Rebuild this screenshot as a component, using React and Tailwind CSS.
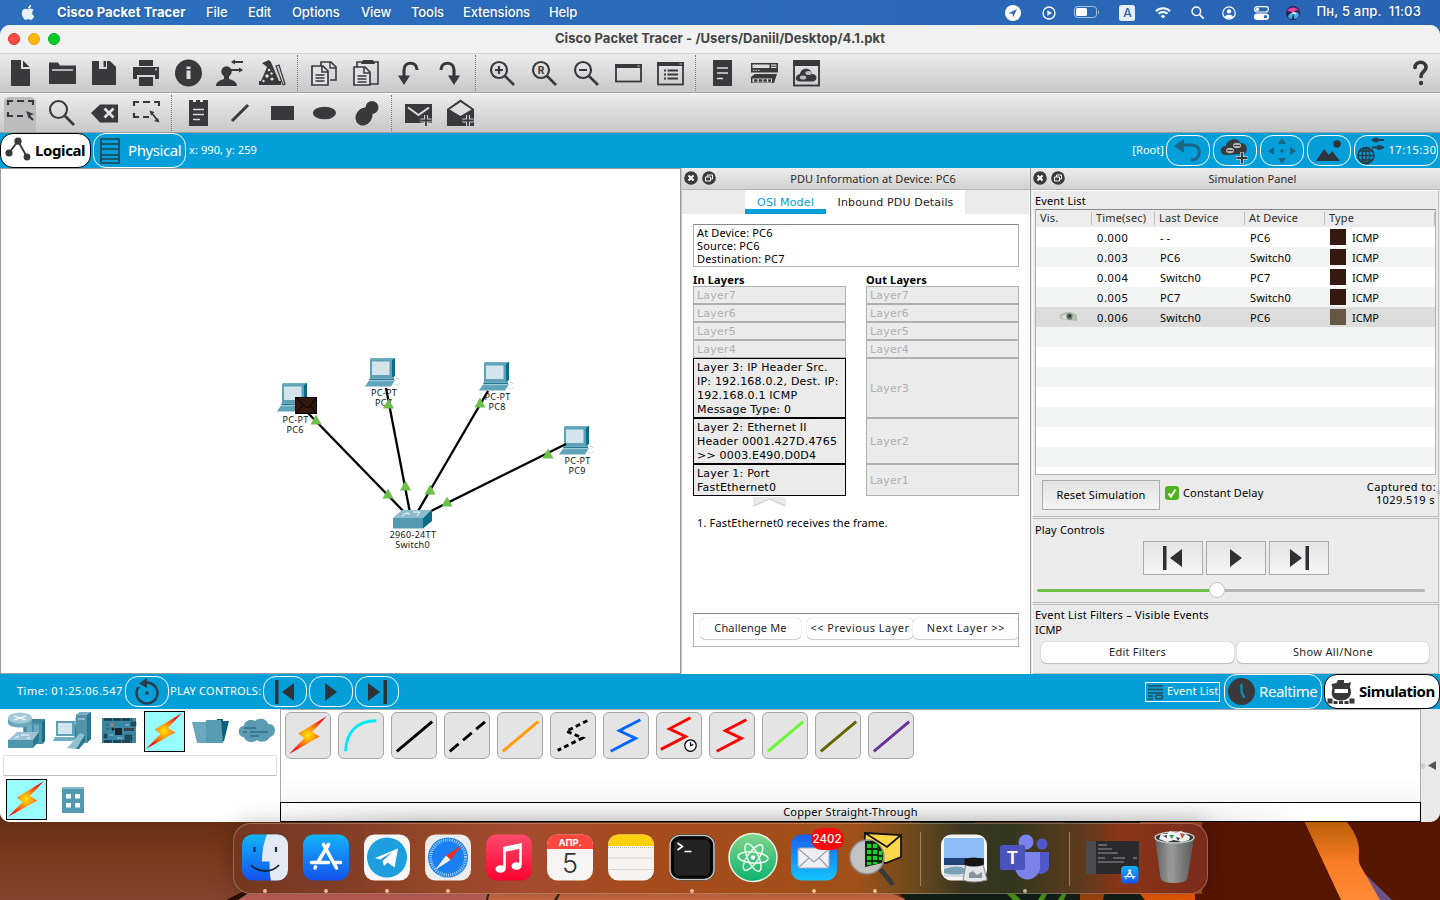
import React from "react";

/* ---------- shared helpers ---------- */
const INK = "#39393b";

function Ico({ children, w = 28, h = 28, vb = "0 0 28 28", className = "" }) {
  return (
    <svg width={w} height={h} viewBox={vb} fill="none" className={"shrink-0 block " + className}>
      {children}
    </svg>
  );
}

function Cell({ children, active }) {
  return (
    <div className="w-[42px] h-full flex items-center justify-center shrink-0 pr-[2px]">
      {active ? (
        <div className="w-8 h-[35px] mt-[3px] rounded-t-[5px] bg-[#bcbcbc] flex items-start justify-center pt-[1px]">{children}</div>
      ) : (
        children
      )}
    </div>
  );
}

function Sep() {
  return (
    <div className="w-[10px] h-full shrink-0 pl-[3px] py-[1px]">
      <div className="h-full w-px border-l border-dotted border-[#777]" />
    </div>
  );
}

/* ---------- macOS menu bar ---------- */
function MenuBar() {
  const items = [
    ["File", "w-[42px]"],
    ["Edit", "w-[44px]"],
    ["Options", "w-[69px]"],
    ["View", "w-[50px]"],
    ["Tools", "w-[52px]"],
    ["Extensions", "w-[86px]"],
    ["Help", "w-[40px]"],
  ];
  return (
    <header className="h-[25px] shrink-0 flex items-center text-white text-[13px] font-medium bg-gradient-to-r from-[#2b6fbd] via-[#2a6bba] to-[#2864b4] [text-shadow:0_1px_2px_rgba(0,0,0,.25)]">
      <Ico w={14} h={17} vb="0 0 384 512" className="ml-[21px] mr-[22px] -mt-[1px]">
        <path
          fill="#e9f0fa"
          d="M318.700 268.700c-.2-36.700 16.400-64.400 50-84.800-18.800-26.900-47.200-41.700-84.700-44.600-35.500-2.800-74.300 20.700-88.500 20.700-15 0-49.400-19.700-76.400-19.700C63.300 141.200 4 184.800 4 273.500q0 39.300 14.400 81.200c12.800 36.700 59 126.700 107.200 125.200 25.200-.6 43-17.900 75.800-17.900 31.800 0 48.300 17.900 76.400 17.900 48.600-.7 90.400-82.500 102.600-119.300-65.200-30.700-61.700-90-61.700-91.900zm-56.600-164.200c27.300-32.400 24.800-61.900 24-72.500-24.100 1.400-52 16.400-67.900 34.900-17.500 19.800-27.800 44.300-25.600 71.900 26.100 2 49.900-11.400 69.500-34.300z"
        />
      </Ico>
      <span className="w-[149px] font-bold tracking-[0.1px]">Cisco Packet Tracer</span>
      {items.map(([t, w]) => (
        <span key={t} className={w + " tracking-[-0.1px]"}>
          {t}
        </span>
      ))}
      <div className="ml-auto flex items-center">
        <Ico w={16} h={16} vb="0 0 16 16" className="mr-[21px]">
          <circle cx="8" cy="8" r="8" fill="#fff" />
          <path d="M3.500 8.200 12 4 8 12.500 7.500 8.700z" fill="#2a69b8" />
        </Ico>
        <Ico w={14} h={14} vb="0 0 14 14" className="mr-[18px]">
          <circle cx="7" cy="7" r="6" stroke="#fff" strokeWidth="1.300" />
          <path d="M5.300 4.200 10 7 5.300 9.800z" fill="#fff" />
        </Ico>
        <Ico w={26} h={13} vb="0 0 26 13" className="mr-[19px]">
          <rect x=".5" y=".5" width="22" height="11" rx="3" stroke="#a9c3e4" />
          <rect x="2" y="2" width="11" height="8" rx="1.500" fill="#fff" />
          <path d="M24 4.200c1.400.8 1.400 3.200 0 4z" fill="#a9c3e4" />
        </Ico>
        <span className="w-4 h-4 rounded-[2.500px] bg-[#e6eefa] text-[#2a5fa6] text-[12px] leading-4 text-center mr-[20px] [text-shadow:none]">A</span>
        <Ico w={16} h={12} vb="0 0 16 12" className="mr-[20px]">
          <path d="M1 4.200a10 10 0 0 1 14 0M3.500 6.800a6.300 6.300 0 0 1 9 0" stroke="#fff" strokeWidth="2" />
          <path d="M5.700 9.200a3.300 3.300 0 0 1 4.600 0L8 11.600z" fill="#fff" />
        </Ico>
        <Ico w={13} h={13} vb="0 0 13 13" className="mr-[18px]">
          <circle cx="5.300" cy="5.300" r="4.300" stroke="#fff" strokeWidth="1.400" />
          <path d="m8.500 8.500 3.700 3.700" stroke="#fff" strokeWidth="1.700" strokeLinecap="round" />
        </Ico>
        <Ico w={14} h={14} vb="0 0 14 14" className="mr-[18px]">
          <circle cx="7" cy="7" r="6.200" stroke="#fff" strokeWidth="1.200" />
          <circle cx="7" cy="5.400" r="2.200" fill="#fff" />
          <path d="M3 11c.5-3 7.500-3 8 0-2 2-6 2-8 0z" fill="#fff" />
        </Ico>
        <Ico w={15} h={14} vb="0 0 15 14" className="mr-[17px]">
          <rect x=".6" y=".6" width="13.800" height="5.400" rx="2.700" stroke="#fff" strokeWidth="1.200" />
          <circle cx="3.500" cy="3.300" r="1.700" fill="#fff" />
          <rect y="7.500" width="15" height="6.500" rx="3.200" fill="#fff" />
          <circle cx="11.500" cy="10.700" r="1.800" fill="#2a69b8" />
        </Ico>
        <Ico w={14} h={14} vb="0 0 14 14" className="mr-[16px]">
          <circle cx="7" cy="7" r="7" fill="#252158" />
          <path d="M1 5.500C3 .5 10 0 12.700 4.500 10 3.500 8 5 6.800 7 5 5.500 3 5 1 5.500z" fill="#e8409a" />
          <path d="M2 10.500C2.500 8 5 7 7 7l-1 6C4 13 2.600 12 2 10.500z" fill="#2bb9c9" />
          <path d="M7 7c3-2 5.500-.5 6 2-1 3-3 4-4.500 4z" fill="#43a7e8" />
          <path d="m4 9 4-3.500L11 9 7.500 7.500z" fill="#fff" />
        </Ico>
        <span className="text-[13px] -mt-[2px] mr-[19px] whitespace-pre tracking-[0.18px]">Пн, 5 апр.  11:03</span>
      </div>
    </header>
  );
}

/* ---------- toolbars ---------- */
function Lens({ children }) {
  return (
    <Ico>
      <circle cx="11" cy="11" r="8" stroke={INK} strokeWidth="2.200" />
      <path d="m17 17 9 9" stroke={INK} strokeWidth="2.600" />
      {children}
    </Ico>
  );
}

const DashBox = (
  <path d="M2 7V3h5M11 3h7M22 3h5v4M2 14v4h5M11 18h6" stroke={INK} strokeWidth="2.200" />
);

function MainToolbar() {
  return (
    <div className="h-[39px] shrink-0 flex bg-gradient-to-b from-[#ececec] to-[#c8c8c8] border-b border-[#a3a3a3] pr-[6px]">
      <Cell><Ico><path d="M5 1h10v9h9v17H5z" fill={INK} /><path d="M17 1.500 23.500 8H17z" fill={INK} /></Ico></Cell>
      <Cell><Ico><path d="M1 3.500h9l2 3h16V25H1z" fill={INK} /><path d="M4 11h21" stroke="#ddd" strokeWidth="1.600" /></Ico></Cell>
      <Cell><Ico><path d="M2 2h18l6 6v18H2z" fill={INK} /><path d="M9 2h8v8H9z" fill="#ddd" /><path d="M13.500 2h2.500v6h-2.500z" fill={INK} /></Ico></Cell>
      <Cell><Ico><path d="M7 1h14v6H7zM1 8h26v12h-4v-4H5v4H1zM7 18h14v9H7z" fill={INK} /><circle cx="24" cy="10.500" r="1" fill="#ddd" /></Ico></Cell>
      <Cell><Ico><circle cx="14.500" cy="14" r="13.500" fill={INK} /><path d="M12.500 11.500h4v8.500h-4zM12.500 7.500h4v2.500h-4z" fill="#dcdcdc" /></Ico></Cell>
      <Cell><Ico><circle cx="10.500" cy="12.500" r="5.200" fill={INK} /><path d="M8 15h5v5c4 1 8 3 8 7H0c0-4 4-6 8-7z" fill={INK} /><path d="M16 3h11M15 11h11" stroke={INK} strokeWidth="1.800" /><path d="m15 3 4-2.500v5zM27 11l-4-2.500v5z" fill={INK} /></Ico></Cell>
      <Cell>
        <Ico>
          <path d="m4 4 7-3 2 2 8 19h2v4H1v-4h2L9 8z" fill={INK} />
          <circle cx="11" cy="11" r="1.300" fill="#ddd" /><circle cx="9" cy="17" r="1.800" fill="#ddd" /><circle cx="14" cy="20" r="1.600" fill="#ddd" /><circle cx="13.500" cy="14.500" r="1.200" fill="#ddd" /><circle cx="5.500" cy="22" r="1.200" fill="#ddd" />
          <path d="m18 7 3-1 6 19-2 1z" fill="#ccc" stroke={INK} strokeWidth="1.200" />
        </Ico>
      </Cell>
      <Sep />
      <Cell>
        <Ico>
          <path d="M11 7V3h10l5 5v13h-6" stroke={INK} strokeWidth="1.600" /><path d="M20 3v6h6" stroke={INK} strokeWidth="1.400" />
          <path d="M2 7h11l5 5v14H2z" fill="#e2e2e2" stroke={INK} strokeWidth="1.700" /><path d="M12 7v6h6" stroke={INK} strokeWidth="1.500" />
          <path d="M5.500 16h9M5.500 19h9M5.500 22h9" stroke={INK} strokeWidth="1.500" />
        </Ico>
      </Cell>
      <Cell>
        <Ico>
          <path d="M5 8V3h21v22h-8" stroke={INK} strokeWidth="1.600" /><path d="M11 1h10l2 4H9z" fill={INK} />
          <path d="M2 8h11l5 5v13H2z" fill="#e2e2e2" stroke={INK} strokeWidth="1.700" /><path d="M12 8v6h6" stroke={INK} strokeWidth="1.500" />
          <path d="M5.500 17h9M5.500 20h9M5.500 23h9" stroke={INK} strokeWidth="1.500" />
        </Ico>
      </Cell>
      <Cell><Ico><path d="M23 11c0-9-13-9-13 0v9" stroke={INK} strokeWidth="3.200" /><path d="M4 16.500h12L10 26z" fill={INK} /></Ico></Cell>
      <Cell><Ico><path d="M5 11c0-9 13-9 13 0v9" stroke={INK} strokeWidth="3.200" /><path d="M12 16.500h12L18 26z" fill={INK} /></Ico></Cell>
      <Sep />
      <Cell><Lens><path d="M7 11h8M11 7v8" stroke={INK} strokeWidth="2.200" /></Lens></Cell>
      <Cell><Lens><text x="11" y="14.700" textAnchor="middle" fontFamily="Inter, sans-serif" fontWeight="700" fontSize="10" fill={INK}>R</text></Lens></Cell>
      <Cell><Lens><path d="M7 11h8" stroke={INK} strokeWidth="2.200" /></Lens></Cell>
      <Cell><Ico><rect x="2" y="6" width="25" height="16.500" stroke={INK} strokeWidth="1.800" /><path d="M1 5h27v4H1z" fill={INK} /><path d="M23.500 6.500h2v1h-2z" fill="#ddd" /></Ico></Cell>
      <Cell><Ico><rect x="2" y="4" width="25" height="21.500" stroke={INK} strokeWidth="1.800" /><path d="M1 3h27v4H1z" fill={INK} /><path d="M23.500 4.500h2v1h-2z" fill="#ddd" /><path d="M8 11.500h2M8 15.500h2M8 19.500h2M11.500 11.500H22M11.500 15.500H22M11.500 19.500H22" stroke={INK} strokeWidth="1.800" /></Ico></Cell>
      <Sep />
      <Cell><Ico><path d="M5 1h19v26H5z" fill={INK} /><path d="M9 9h11M9 14h11M9 19.500h6" stroke="#ddd" strokeWidth="1.700" /></Ico></Cell>
      <Cell>
        <Ico>
          <path d="M1 4h27v9.500H1z" fill={INK} /><path d="M2.500 5.500h17v3.500h-17zM21 5.500h5.500v1.200H21zM21 7.800h5.500V9H21z" fill="#ddd" /><path d="M3 11.300h7" stroke="#ddd" strokeDasharray="1.500 1" />
          <path d="M5 15h22l-3 9H1v-6z" fill={INK} /><path d="M2.500 19.500h19.500v4H2.500z" fill="#ddd" /><path d="M4 21.500h17" stroke={INK} strokeWidth="2.600" strokeDasharray="3.500 1.200" />
        </Ico>
      </Cell>
      <Cell>
        <Ico>
          <rect x="2" y="2" width="25" height="24.500" stroke={INK} strokeWidth="1.900" /><path d="M1 1h27v6H1z" fill={INK} />
          <path d="M8 22.500c-6 0-5-7 0-7.500 1-7 11-7 12 0 6 0 6 7.500 0 7.500z" fill={INK} />
          <ellipse cx="16.500" cy="14" rx="3.200" ry="2" fill="#bbb" /><ellipse cx="11" cy="18.500" rx="3.200" ry="2" fill="#bbb" />
        </Ico>
      </Cell>
      <div className="ml-auto flex items-center">
        <Ico><path d="M9 8.500c0-7 11-7 11 0 0 4-5 4-5 9" stroke={INK} strokeWidth="3.700" strokeLinecap="round" /><circle cx="15" cy="24" r="2.200" fill={INK} /></Ico>
      </div>
    </div>
  );
}

function EditToolbar() {
  return (
    <div className="h-10 shrink-0 flex bg-gradient-to-b from-[#ececec] to-[#c8c8c8] border-t border-white border-b border-b-[#9b9b9b]">
      <Cell active><Ico>{DashBox}<path d="m27 22-3.500-3.500" stroke={INK} strokeWidth="2" /><path d="m19 13 8 3-3.200 1.200L22 21z" fill={INK} transform="translate(1 0)" /></Ico></Cell>
      <Cell><Ico><circle cx="10.500" cy="10.500" r="8.500" stroke={INK} strokeWidth="2.100" /><path d="m17 17 9 9" stroke={INK} strokeWidth="2.600" /></Ico></Cell>
      <Cell><Ico><path d="M1 14 10 5.500h18v18H10z" fill={INK} /><path d="m14.500 9.500 9 9M23.500 9.500l-9 9" stroke="#e4e4e4" strokeWidth="2.800" /></Ico></Cell>
      <Cell><Ico>{DashBox}<path d="m19 13 7 9" stroke={INK} strokeWidth="1.800" /><path d="m17.500 11.500 5 1.500-3.500 3.500zM27.500 23.500l-5.500-1.500 4-3z" fill={INK} /></Ico></Cell>
      <Sep />
      <Cell><Ico><path d="M5 1h4v2h3V1h4v2h3V1h5v26H5z" fill={INK} /><path d="M9 10.500h11M9 15.500h11M9 20.500h7" stroke="#ddd" strokeWidth="1.700" /></Ico></Cell>
      <Cell><Ico><path d="M6 22 22 6" stroke={INK} strokeWidth="3" /></Ico></Cell>
      <Cell><Ico><path d="M3 7h23v14H3z" fill={INK} /></Ico></Cell>
      <Cell><Ico><ellipse cx="14.500" cy="14" rx="11.500" ry="6.300" fill={INK} /></Ico></Cell>
      <Cell><Ico><ellipse cx="12" cy="17.500" rx="8" ry="9.500" fill={INK} transform="rotate(35 12 17.500)" /><circle cx="20" cy="8.500" r="6.500" fill={INK} /></Ico></Cell>
      <Sep />
      <Cell><Ico><path d="M1 5h27v19H1z" fill={INK} /><path d="m4 8.500 10.500 7.500 10.500-7.500" stroke="#ddd" strokeWidth="2" /><path d="M22 16v11M16.500 21.500h11" stroke="#cfcfcf" strokeWidth="4" /><path d="M22 16v11M16.500 21.500h11" stroke={INK} strokeWidth="1.800" /></Ico></Cell>
      <Cell><Ico><path d="M1 10 14.500.500 28 10v17H1z" fill={INK} /><path d="M3.500 10.500 14.500 3l11 7.500-11 6.500z" fill="#ddd" /><path d="M22 16v11M16.500 21.500h11" stroke="#cfcfcf" strokeWidth="4" /><path d="M22 16v11M16.500 21.500h11" stroke={INK} strokeWidth="1.800" /></Ico></Cell>
    </div>
  );
}

const LG = "font-['Noto_Sans',sans-serif]";

function Pill({ children, className = "" }) {
  return (
    <div className={"h-[31px] rounded-[13px] border border-white flex items-center justify-center shrink-0 " + className}>
      {children}
    </div>
  );
}

function NavBar() {
  return (
    <div className={"h-[35px] shrink-0 flex items-center bg-[#049fd9] text-white " + LG}>
      <div className="w-[91px] h-[35px] rounded-[13px] bg-white border border-black flex items-center pl-1 text-black">
        <Ico w={26} h={24} vb="0 0 26 24" className="-mt-[3px]">
          <path d="M4 16 13 4l9 16" stroke={INK} strokeWidth="1.800" />
          <circle cx="4" cy="16" r="3.600" fill={INK} /><circle cx="13" cy="4.200" r="3.600" fill={INK} /><circle cx="22" cy="20" r="3.400" fill={INK} />
        </Ico>
        <span className="text-[15px] font-bold ml-[4px] tracking-[-0.4px]">Logical</span>
      </div>
      <div className="w-[93px] h-[35px] ml-[2px] rounded-[13px] border border-white flex items-center pl-[6px]">
        <Ico w={20} h={26} vb="0 0 20 26">
          <path d="M1 1h18v24H1zM1 6h18M1 11h18M1 17h18M1 21h18" stroke="#20434f" strokeWidth="1.700" />
        </Ico>
        <span className="text-[15px] ml-[8px] tracking-[-0.4px]">Physical</span>
      </div>
      <span className="text-[11px] ml-[3px] tracking-[0.1px]">x: 990, y: 259</span>
      <span className="text-[11px] ml-auto mr-[2px] tracking-[0.05px]">[Root]</span>
      <div className="flex gap-[3px] mr-[2px]">
        <Pill className="w-11"><Ico w={30} h={24} vb="0 0 30 24"><path d="M10 6h9c10 0 10 15-1 15" stroke="#1d6585" strokeWidth="3" /><path d="M1 7 11 0v14z" fill="#1d6585" /></Ico></Pill>
        <Pill className="w-11">
          <Ico w={30} h={26} vb="0 0 30 26">
            <path d="M6 17c-7 0-7-9 0-9C7 0 19-1 20 5c7-1 9 8 4 11z" fill={INK} />
            <ellipse cx="17" cy="7.500" rx="4" ry="2.700" fill="#b5b5b5" /><ellipse cx="10" cy="12.500" rx="4" ry="2.700" fill="#b5b5b5" /><path d="M14 7.500h6M7 12.500h6" stroke={INK} />
            <path d="M22 14v12M16 20h12" stroke="#c9d3d8" strokeWidth="3.600" /><path d="M22 14.500v11M16.500 20h11" stroke={INK} strokeWidth="2" />
          </Ico>
        </Pill>
        <Pill className="w-11"><Ico w={28} h={26} vb="0 0 28 26"><path d="m14 0 4 6h-8zM14 26l4-6h-8zM0 13l6-4v8zM28 13l-6-4v8z" fill="#1d6585" /><circle cx="14" cy="13" r="1.800" fill="#1d6585" /></Ico></Pill>
        <Pill className="w-11"><Ico w={28} h={24} vb="0 0 28 24"><path d="m1 22 8-12 5 6 3-4 8 10z" fill="#2d353b" /><circle cx="22" cy="5" r="3.700" fill="#2d353b" /></Ico></Pill>
        <Pill className="w-[84px]">
          <Ico w={28} h={28} vb="0 0 28 28">
            <g stroke="#273d49" strokeWidth="1.600"><circle cx="9" cy="18.500" r="8" /><ellipse cx="9" cy="18.500" rx="3.800" ry="8" /><path d="M1 18.500h16M9 10.500v16M2.500 14h13M2.500 23h13" /></g>
            <path d="M15 3h12M15 10.500h12" stroke="#273d49" strokeWidth="1.800" /><path d="m14 3 3.500-2.200h3.500v4.400h-3.500zM27 10.500l-3.500-2.200h-3.500v4.400h3.500z" fill="#273d49" />
          </Ico>
          <span className="text-[11px] ml-[3px] mr-[-2px] tracking-[0.55px]">17:15:30</span>
        </Pill>
      </div>
    </div>
  );
}

/* ---------- topology canvas ---------- */
function Pc({ x, y }) {
  return (
    <g transform={`translate(${x} ${y})`}>
      <path d="m5 1 3-1h22v18l-3 2H5z" fill="#0a6c87" />
      <path d="m5 1 3-1h22l-3 2H5z" fill="#6fadc2" />
      <rect x="5" y="1.500" width="22" height="18" fill="#5fa0b8" />
      <rect x="7" y="3.500" width="17.500" height="13.500" fill="#d3e5ea" />
      <path d="M5 19.500h24v3H4z" fill="#23788f" />
      <path d="M5 19.500h24l-1 1.300H5z" fill="#8fbfce" />
      <path d="m4 22.500 26-.5-4 6.500H0z" fill="#5fa3bb" />
      <path d="m4 22.800 25-.3" stroke="#a9d0dc" />
      <path d="m31 20 3 1-2 2M29 26l4 1 2-2" stroke="#b4d3de" strokeDasharray="2 1" fill="none" />
    </g>
  );
}

function Topology() {
  const links = ["M308 413 410 518", "M386 388 411 518", "M488 391 414 518", "M566 444 423 515"];
  const lights = [[316, 420], [388.500, 404], [480, 403], [548, 454], [388, 494], [405.500, 486], [430, 490], [447, 502]];
  const labels = [
    [295.500, 422.500, "PC-PT", "PC6"],
    [384, 396, "PC-PT", "PC7"],
    [497.500, 400, "PC-PT", "PC8"],
    [577.500, 464, "PC-PT", "PC9"],
    [413, 538, "2960-24TT", "Switch0"],
  ];
  return (
    <div className="w-[681px] bg-white border-l border-t border-b border-[#9b9b9b] border-r">
      <svg width="679" height="503" viewBox="1 169 679 503" fill="none" className="block">
        <Pc x={277} y={383} /><Pc x={365} y={358} /><Pc x={479} y={362} /><Pc x={559} y={426} />
        {links.map((d) => <path key={d} d={d} stroke="#000" strokeWidth="2.300" />)}
        <path d="m393 518 9-8h30l-9 8z" fill="#8dbccb" />
        <path d="M393 518h30v10.500h-30z" fill="#529ab2" /><path d="m423 518 9-8v11l-9 7.500z" fill="#0a6c87" />
        <path d="m402 516 4-3 4 1M413 512h7l-3 4" stroke="#fff" />
        <g fontFamily="'Noto Sans',sans-serif" fontSize="9" fill="#111" textAnchor="middle" letterSpacing=".3">
          {labels.map(([x, y, a, b]) => (
            <text key={b} x={x} y={y}>
              {a}
              <tspan x={x - 0.500} dy="10">{b}</tspan>
            </text>
          ))}
        </g>
        {lights.map(([x, y]) => <path key={x + "-" + y} d={`M${x} ${y - 5.500}l5.500 10h-11z`} fill="#6cc04a" />)}
        <rect x="295.500" y="397.500" width="21" height="16" fill="#32180f" stroke="#000" />
        <path d="m296 398 10 9q2 1 4-1l6-8M296 413l7-8M316 413l-6-8" stroke="#000" />
      </svg>
    </div>
  );
}

/* ---------- PDU panel ---------- */
function PanelHead({ title }) {
  return (
    <div className="h-[22px] shrink-0 flex items-center bg-gradient-to-b from-[#ececec] to-[#d2d2d2] border-b border-[#b5b5b5] pl-[2px]">
      <Ico w={32} h={14} vb="0 0 32 14" className="-mt-px">
        <circle cx="7" cy="7" r="6.800" fill="#3b3b3b" /><path d="m4.500 4.500 5 5M9.500 4.500l-5 5" stroke="#fff" strokeWidth="2" />
        <circle cx="25" cy="7" r="6.800" fill="#3b3b3b" /><path d="M23.500 6V4h5v4h-2M21.500 6h5v4h-5z" stroke="#fff" />
      </Ico>
      <span className="flex-1 text-center text-[11px] text-[#2a2a2a] tracking-[0.08px] pt-px">{title}</span>
    </div>
  );
}

function Layer({ t, h, on }) {
  return (
    <div
      className={
        (on ? "border-black text-black " : "border-[#b0b0b0] text-[#b0b0b0] ") +
        h +
        " border bg-[#ebebeb] pl-[3px] pt-[2px] flex items-center text-[11px] leading-[14px] whitespace-pre tracking-[0.2px] font-['DejaVu_Sans',sans-serif]"
      }
    >
      {t}
    </div>
  );
}

function MacButton({ children, className = "" }) {
  return (
    <div className={"h-[21px] rounded-[5px] bg-white shadow-[0_0_1px_rgba(0,0,0,.35),0_1px_1px_rgba(0,0,0,.18)] flex items-center justify-center whitespace-nowrap text-[11px] text-[#1f1f1f] " + className}>
      {children}
    </div>
  );
}

function PduPanel() {
  const thin = ["Layer7", "Layer6", "Layer5", "Layer4"];
  return (
    <section className={"w-[349px] bg-white border-l border-[#c4c4c4] flex flex-col text-black tracking-[0.15px] " + LG}>
      <PanelHead title="PDU Information at Device: PC6" />
      <div className="h-6 shrink-0 bg-[#ebebeb] flex pl-[63px] mr-[1px] text-[11px] font-['DejaVu_Sans',sans-serif]">
        <div className="w-[81px] bg-white border-b-[5px] border-[#049fd9] text-[#049fd9] text-center leading-[25px]">OSI Model</div>
        <div className="w-[139px] bg-white text-[#222] text-center leading-[25px]">Inbound PDU Details</div>
      </div>
      <div className="mt-[10px] ml-[11px] w-[326px] h-[43px] border border-[#b0b0b0] border-t-[#888] pl-[3px] pt-px text-[11px] leading-[13px] shrink-0">
        <div>At Device: PC6</div>
        <div>Source: PC6</div>
        <div>Destination: PC7</div>
      </div>
      <div className="ml-[11px] w-[326px] mt-[6px] flex justify-between text-[11px]">
        <div className="w-[153px]">
          <div className="h-[13px] leading-[14px] font-bold">In Layers</div>
          {thin.map((t) => <Layer key={t} t={t} h="h-[18px]" />)}
          <Layer on h="h-[60px]" t={"Layer 3: IP Header Src.\nIP: 192.168.0.2, Dest. IP:\n192.168.0.1 ICMP\nMessage Type: 0"} />
          <Layer on h="h-[46px]" t={"Layer 2: Ethernet II\nHeader 0001.427D.4765\n>> 0003.E490.D0D4"} />
          <Layer on h="h-[32px]" t={"Layer 1: Port\nFastEthernet0"} />
        </div>
        <div className="w-[153px]">
          <div className="h-[13px] leading-[14px] font-bold">Out Layers</div>
          {thin.map((t) => <Layer key={t} t={t} h="h-[18px]" />)}
          <Layer h="h-[60px]" t="Layer3" />
          <Layer h="h-[46px]" t="Layer2" />
          <Layer h="h-[32px]" t="Layer1" />
        </div>
      </div>
      <Ico w={33} h={10} vb="0 0 33 10" className="ml-[71px] mt-[1px]">
        <path d="M0 0h33v9H0z" fill="#ebebeb" /><path d="m1 9 15.500-7L32 9" fill="#fff" stroke="#c8c8c8" />
      </Ico>
      <div className="ml-[15px] mt-[8px] text-[11px] leading-[15px]">1. FastEthernet0 receives the frame.</div>
      <div className="ml-[11px] mt-auto mb-[27px] w-[326px] h-[34px] border border-[#b0b0b0] border-t-[#888] flex items-center pb-[3px] pl-[6px] overflow-hidden">
        <MacButton className="w-[101px] shrink-0">Challenge Me</MacButton>
        <MacButton className="w-[106px] ml-[6px] shrink-0 tracking-[0.5px]">&lt;&lt; Previous Layer</MacButton>
        <MacButton className="w-[106px] shrink-0 tracking-[0.6px]">Next Layer &gt;&gt;</MacButton>
      </div>
    </section>
  );
}

/* ---------- simulation panel ---------- */
const PREV = "M4 2h3.500v24H4zM23 5v18L11 14z";
const PLAY = "M8 5v18l12-9z";
const NEXT = "M20.500 2H24v24h-3.500zM5 5v18l12-9z";

function SimPanel() {
  const rows = [
    ["0.000", "--", "PC6"],
    ["0.003", "PC6", "Switch0"],
    ["0.004", "Switch0", "PC7"],
    ["0.005", "PC7", "Switch0"],
    ["0.006", "Switch0", "PC6"],
  ];
  const stripe = [1, 0, 1, 0, 1, 0, 1];
  return (
    <section className={"w-[410px] bg-[#ebebeb] border-l border-[#999] flex flex-col text-[11px] text-black tracking-[0.15px] " + LG}>
      <PanelHead title="Simulation Panel" />
      <div className="h-[327px] shrink-0 mx-px border border-[#bdbdbd] border-t-white border-l-white flex flex-col pl-[2px] pr-[2px]">
        <div className="h-[18px] leading-[19px]">Event List</div>
        <div className="h-[266px] border border-[#b0b0b0] border-t-[#888] bg-white overflow-hidden shrink-0">
          <div className="h-[17px] bg-[#ececec] flex items-center text-[#2c2c2c] leading-[12px]">
            <div className="w-[56px] h-[13px] pl-1 border-r border-[#bdbdbd]">Vis.</div>
            <div className="w-[63px] h-[13px] pl-1 border-r border-[#bdbdbd]">Time(sec)</div>
            <div className="w-[90px] h-[13px] pl-1 border-r border-[#bdbdbd]">Last Device</div>
            <div className="w-[80px] h-[13px] pl-1 border-r border-[#bdbdbd]">At Device</div>
            <div className="flex-1 h-[13px] pl-1 border-r border-[#bdbdbd]">Type</div>
          </div>
          {rows.map(([t, l, a], i) => (
            <div key={t} className={"h-5 flex items-center leading-[14px] " + (i === 4 ? "bg-[#dcdcdc]" : i % 2 ? "bg-[#f3f5f5]" : "bg-white")}>
              <div className="w-[61px] pl-[24px]">
                {i === 4 && (
                  <Ico w={17} h={10} vb="0 0 17 10">
                    <path d="M0 3c5-4 12-4 17 0v6C12 8 4 9 0 6z" fill="#b3bcae" /><path d="M1 5c4-3 9-4 13 0-4 4-9 3-13 0z" fill="#dfe3da" /><circle cx="9.500" cy="4.500" r="3.200" fill="#6b7a6c" /><circle cx="9.500" cy="4" r="1.600" fill="#2b3330" />
                  </Ico>
                )}
              </div>
              <div className="w-[63px] pt-[2px] tracking-[0.65px]">{t}</div>
              <div className="w-[90px] pt-[2px]">{l === "--" ? <span className="tracking-[3px]">‐‐</span> : l}</div>
              <div className="w-[80px] pt-[2px]">{a}</div>
              <div className={"w-4 h-4 mr-[6px] " + (i === 4 ? "bg-[#655744]" : "bg-[#35180f]")} />
              <div className="pt-[2px] tracking-[-0.1px]">ICMP</div>
            </div>
          ))}
          {stripe.map((s, i) => <div key={i} className={"h-5 " + (s ? "bg-[#f3f5f5]" : "bg-white")} />)}
        </div>
        <div className="flex pl-[7px] pt-[5px]">
          <div className="w-[118px] h-[30px] border border-[#aaa] bg-gradient-to-b from-[#e3e3e3] to-[#f4f4f4] flex items-center justify-center">Reset Simulation</div>
          <Ico w={14} h={14} vb="0 0 14 14" className="ml-[5px] mt-[6px]">
            <rect width="14" height="14" rx="3" fill="#4fb31d" /><path d="m3.500 7.500 2.500 3 4.500-7" stroke="#fff" strokeWidth="2" />
          </Ico>
          <div className="ml-[4px] mt-[5px]">Constant Delay</div>
          <div className="ml-auto mt-0 mr-[6px] text-right leading-[13px] tracking-[0.4px]">
            <div className="-mr-px">Captured to:</div>
            <div>1029.519 s</div>
          </div>
          <div className="w-0 text-[#aaa] mt-[5px] -ml-[5px]"><span className="text-[9px]">*</span></div>
        </div>
      </div>
      <div className="h-[85px] shrink-0 mt-px mx-px border border-[#bdbdbd] border-l-white pl-[2px]">
        <div className="leading-[21px] h-[22px]">Play Controls</div>
        <div className="flex gap-[3px] pl-[108px]">
          {[PREV, PLAY, NEXT].map((d) => (
            <div key={d} className="w-[60px] h-[34px] border border-[#aaa] bg-gradient-to-b from-[#e3e3e3] to-[#f7f7f7] flex items-center justify-center">
              <Ico><path d={d} fill="#2f3033" /></Ico>
            </div>
          ))}
        </div>
        <div className="flex items-center h-[16px] mt-[7px] pl-[2px]">
          <div className="w-[172px] h-[3px] rounded-l bg-[#6cc04a]" />
          <div className="w-4 h-4 rounded-full bg-white border border-[#c4c4c4]" />
          <div className="w-[200px] h-[3px] rounded-r bg-[#b5b5b5]" />
        </div>
      </div>
      <div className="h-[70px] shrink-0 mt-px mx-px border border-[#bdbdbd] border-l-white pl-[2px] pt-[2px]">
        <div className="leading-[15px] tracking-[0.25px]">Event List Filters – Visible Events</div>
        <div className="leading-[15px] tracking-[-0.1px]">ICMP</div>
        <div className="flex gap-[3px] pl-[6px] mt-[5px]">
          <MacButton className="w-[193px] tracking-[0.25px]">Edit Filters</MacButton>
          <MacButton className="w-[192px] tracking-[0.35px]">Show All/None</MacButton>
        </div>
      </div>
    </section>
  );
}

/* ---------- time bar ---------- */
function TimeBar() {
  return (
    <div className={"h-[35px] shrink-0 flex items-center bg-[#049fd9] text-white text-[11px] pl-[17px] whitespace-nowrap " + LG}>
      <span className="w-[108px] tracking-[0.5px]">Time: 01:25:06.547</span>
      <Pill className="w-11">
        <Ico><circle cx="14" cy="15" r="10.500" stroke="#273d49" strokeWidth="2.400" /><path d="M3 2h9v7H3z" fill="#049fd9" /><path d="M6 5.500 14 0v10z" fill="#273d49" /><circle cx="14" cy="15" r="1.800" fill="#273d49" /></Ico>
      </Pill>
      <span className="ml-[1px] w-[93px] tracking-[0.25px]">PLAY CONTROLS:</span>
      <div className="flex gap-[2px]">
        {[PREV, PLAY, NEXT].map((d) => <Pill key={d} className="w-11"><Ico className="-ml-px"><path d={d} fill="#2d3338" /></Ico></Pill>)}
      </div>
      <div className="ml-auto mr-[4px] w-[75px] h-5 border border-white flex items-center pl-[2px]">
        <Ico w={16} h={16} vb="0 0 16 16"><path d="M0 2h15M0 5.500h15M0 9h15M0 12h5M0 15h5" stroke="#2c4a58" strokeWidth="1.600" /><ellipse cx="11" cy="13" rx="3.500" ry="2" stroke="#2c4a58" strokeWidth="1.500" /></Ico>
        <span className="ml-[3px] tracking-[0.2px]">Event List</span>
      </div>
      <div className="w-[98px] h-[35px] rounded-[13px] border border-white flex items-center pl-[3px] mr-[2px]">
        <Ico w={28} h={28}><circle cx="13.500" cy="13.500" r="13.500" fill={INK} /><path d="M13.500 7v7l2.500 5" stroke="#1583ad" strokeWidth="2.600" strokeLinecap="round" /></Ico>
        <span className="ml-[3px] text-[15px] tracking-[-0.45px]">Realtime</span>
      </div>
      <div className="w-[116px] h-[35px] rounded-[13px] border border-black bg-white text-black flex items-center pl-[2px]">
        <Ico w={28} h={26} vb="0 0 28 26"><path d="M11 1h6v3h4l3-1-1 5c3 8-1 13.500-9 13.500S3 16 5.500 9L4.500 5l5-1z" fill={INK} /><path d="M7.500 10h13.500v4H7.500z" fill="#fff" /><path d="M0.500 19.500h5v5h-5zM6.500 22h4v3h-4zM12 22h4v3h-4zM17.500 22h4v3h-4zM22.500 19.500h5v5h-5z" fill={INK} /></Ico>
        <span className="ml-[4px] text-[15px] font-bold tracking-[-0.5px]">Simulation</span>
      </div>
    </div>
  );
}

/* ---------- device dock ---------- */
function Bolt({ size = 39 }) {
  return (
    <Ico w={size} h={size} vb="0 0 40 40">
      <defs>
        <radialGradient id="bolt" cx=".5" cy=".5" r=".5"><stop offset="0" stopColor="#ffe800" /><stop offset=".45" stopColor="#ff8a10" /><stop offset="1" stopColor="#f41010" /></radialGradient>
      </defs>
      <path d="M38 1 10 18l6 4.500L1 38l30-17-7.500-4.500z" fill="url(#bolt)" />
    </Ico>
  );
}

function DevicePicker() {
  return (
    <div className="w-[280px] shrink-0 bg-white flex flex-col">
      <div className="h-[46px] flex items-center pb-[2px]">
        <Ico w={40} h={40} vb="0 0 40 40" className="ml-[7px]">
          <path d="M16 12 21 8h17v22l-3 3H17z" fill="#3b869e" /><path d="M18 12h17v20H18z" fill="#4a93ab" /><path d="M20 14h5v12h-5zM27 14h5v12h-5z" fill="#6fabc0" /><path d="m35 12 3-4v22l-3 3z" fill="#1e6b85" />
          <path d="M1 7v5c0 6 24 6 24 0V7z" fill="#6aa7bc" /><ellipse cx="13" cy="7" rx="12" ry="5.500" fill="#a3cbd7" /><path d="m7 5 12 4M19 5 7 9" stroke="#fff" strokeWidth="1.300" />
          <path d="m1 29 9-8h22l-6 8z" fill="#9cc4d2" /><path d="M1 29h25v8H1z" fill="#4d96ae" /><path d="m26 29 6-8v9l-6 7z" fill="#2a7890" /><path d="m8 27 4-2M14 24l8 0M20 27h3" stroke="#fff" />
        </Ico>
        <Ico w={40} h={40} vb="0 0 40 40" className="ml-[5px]">
          <path d="m24 4 4-3h11v27l-4 4H22z" fill="#2b7690" /><path d="m24 4 4-3h11l-4 3z" fill="#7ab0c3" /><path d="M24 4h11v28H24z" fill="#5093aa" /><path d="M26 8h7" stroke="#c9e0e7" />
          <path d="M4 10h19v15H4z" fill="#5fa0b8" /><path d="M6 12h14v11H6z" fill="#d3e5ea" /><path d="M3 26h21l-3 4H1z" fill="#6fadc2" /><path d="m17 35 11-13 5 2-9 14-9-1z" fill="#8fc0cf" /><path d="m24 38 9-14v7l-6 7z" fill="#2b7690" />
        </Ico>
        <Ico w={36} h={28} vb="0 0 36 28" className="ml-[9px]">
          <path d="M1 1h34v25H1z" fill="#3b87a3" /><path d="M3 2.500h28M3 24.500h28" stroke="#183d4c" strokeWidth="2.500" strokeDasharray="8 1" />
          <path d="M14 11h7v7h-7z" fill="#17252b" /><path d="M23 11h10v3H23z" fill="#35444a" /><circle cx="11" cy="8" r="1.800" fill="#a8836c" /><circle cx="12" cy="12" r="1.500" fill="#222" /><path d="M30 5h5v4h-5zM3 17h3v4H3zM5 8h3M5 12h3M24 18h7v5h-7z" fill="#224b5b" stroke="#1e4454" strokeWidth=".6" /><path d="M8 18h4M16 21h6M24 8h4" stroke="#9bc4d2" />
        </Ico>
        <div className="ml-[7px] w-[41px] h-[41px] border border-black bg-[#98fcfe] flex items-center justify-center"><Bolt /></div>
        <Ico w={38} h={28} vb="0 0 38 28" className="ml-[7px]">
          <path d="M14 4h10l1-2h6v2h6l-5 20-4 2z" fill="#0b6078" /><path d="M0 5h13l2-2h14l2 23H5z" fill="#6aa8bd" /><path d="m14 3 15 0 2 23H14z" fill="#438da6" opacity=".5" />
        </Ico>
        <Ico w={38} h={26} vb="0 0 38 26" className="ml-[8px]">
          <path d="M6 19C-1 19-1 8 6 8 6 2 14 1 17 3c4-4 12-2 13 3 9-1 9 12 2 13-2 5-10 6-13 3-4 4-12 2-13-3z" fill="#5a9bb2" /><path d="M6 10h12M12 14h18M5 14h4M12 18h9" stroke="#2f718a" strokeWidth="1.700" />
        </Ico>
      </div>
      <div className="mx-[3px] h-[21px] border border-[#e3e3e3] border-b-[#bbb]" />
      <div className="flex items-center mt-[3px] pl-[6px]">
        <div className="w-[41px] h-[41px] border border-black bg-[#98fcfe] flex items-center justify-center"><Bolt /></div>
        <Ico w={22} h={26} vb="0 0 22 26" className="ml-[15px]">
          <path d="M0 0h22v26H0z" fill="#5299b1" /><path d="M0 0h22v2H0z" fill="#87bccd" /><path d="M4 7h5v4.500H4zM13 7h5v4.500h-5zM4 16h5v4.500H4zM13 16h5v4.500h-5z" fill="#fff" />
        </Ico>
      </div>
    </div>
  );
}

const ZIG = "M38 6 16 17.500l17 8L7 39";
function Cables() {
  const line = "M5 39 42 8";
  const tools = [
    <Bolt key="b" size={41} />,
    <path d="M7 39C7 20 18 7 39 7" stroke="#00e8fa" strokeWidth="3" />,
    <path d={line} stroke="#000" strokeWidth="3" />,
    <path d={line} stroke="#000" strokeWidth="3" strokeDasharray="12 6" />,
    <path d={line} stroke="#ff9b00" strokeWidth="3" />,
    <path d="M38 7 16 18l17 7L7 38" stroke="#000" strokeWidth="3" strokeDasharray="5 3.500" />,
    <path d={ZIG} stroke="#0066ff" strokeWidth="3" />,
    <g><path d={ZIG} stroke="#fd0000" strokeWidth="3" transform="translate(-3 -2)" /><circle cx="35" cy="33" r="6" fill="#fff" stroke="#000" strokeWidth="1.300" /><path d="M35 29.500V33l3-1" stroke="#000" strokeWidth="1.300" /></g>,
    <path d={ZIG} stroke="#fd0000" strokeWidth="3" />,
    <path d={line} stroke="#64fb30" strokeWidth="3" />,
    <path d={line} stroke="#666400" strokeWidth="3" />,
    <path d={line} stroke="#663199" strokeWidth="3" />,
  ];
  return (
    <div className="w-[1141px] shrink-0 flex flex-col">
      <div className="h-[93px] bg-gradient-to-b from-white from-75% to-[#f7f7f7] border-l border-t border-r border-[#a9a9a9] flex gap-[7px] pl-[4px] pt-[2px]">
        {tools.map((t, i) => (
          <div key={i} className="w-[46px] h-[47px] rounded-[6px] border border-[#a6a6a6] bg-[#e4e4e4] flex items-center justify-center">
            {i === 0 ? t : <Ico w={44} h={44} vb="0 0 46 46">{t}</Ico>}
          </div>
        ))}
      </div>
      <div className={"h-[20px] border border-black bg-[linear-gradient(90deg,#fff,transparent_12%,transparent_80%,#fff_90%),linear-gradient(#fafafa,#e8e8e8)] text-center text-[11px] tracking-[0.25px] leading-[18px] text-black " + LG}>Copper Straight-Through</div>
    </div>
  );
}

/* ---------- macOS dock ---------- */
function Tile({ children, dot, dotColor = "bg-[#f2b79c]" }) {
  return (
    <div className="w-[61px] h-full shrink-0 flex flex-col items-center pt-[7px] relative">
      <Ico w={54} h={56} vb="0 0 54 56">{children}</Ico>
      {dot && <div className={"w-1 h-1 rounded-full mt-[2px] " + dotColor} />}
    </div>
  );
}

function Base({ fill, stroke }) {
  return <rect x="4" y="3.500" width="46" height="46" rx="10.500" fill={fill} stroke={stroke} />;
}

function DockSep({ className }) {
  return <div className={"w-px h-[54px] mt-[8px] bg-[#c99a78]/70 shrink-0 " + className} />;
}

function AppA({ x = 0, y = 0, s = 1 }) {
  return (
    <g transform={`translate(${x} ${y}) scale(${s})`} stroke="#fff" strokeWidth="3.600" strokeLinecap="round">
      <path d="M24.500 13.500 37.500 37M29.500 13.500 19 31M12.500 31.500h17M36 31.500h5.500M16.500 36l-.5 1" />
    </g>
  );
}

function Dock() {
  return (
    <div className="relative mt-px w-[975px] h-[71px] rounded-[18px] border border-white/25 bg-[linear-gradient(90deg,#74371c_0%,#7c3b26_8%,#954626_20%,#a54b30_30%,#a54b1c_42%,#a05018_64%,#6b4a1e_70%,#3a3520_75%,#33371f_80%,#5e3a1d_87%,#8a3517_91%,#7a2c1c_100%)] flex pl-[1px] shadow-[0_0_22px_rgba(0,0,0,.25)]">
      <svg width="0" height="0" className="absolute">
        <defs>
          <linearGradient id="blue" x1="0" y1="0" x2="0" y2="1"><stop stopColor="#12b4fb" /><stop offset="1" stopColor="#1452ec" /></linearGradient>
          <linearGradient id="mail" x1="0" y1="0" x2="0" y2="1"><stop stopColor="#1a5ff0" /><stop offset="1" stopColor="#14c4fd" /></linearGradient>
          <linearGradient id="red" x1="0" y1="0" x2="0" y2="1"><stop stopColor="#fd4a6c" /><stop offset="1" stopColor="#fb0330" /></linearGradient>
          <linearGradient id="green" x1="0" y1="0" x2="0" y2="1"><stop stopColor="#83d68b" /><stop offset="1" stopColor="#0cb26f" /></linearGradient>
          <linearGradient id="bin" x1="0" y1="0" x2="1" y2="0"><stop stopColor="#5c6263" /><stop offset=".4" stopColor="#9da3a3" /><stop offset="1" stopColor="#54595a" /></linearGradient>
        </defs>
      </svg>
      <Tile dot>
        <Base fill="url(#blue)" />
        <path d="M29 3.500h10.500A10.500 10.500 0 0 1 50 14v25a10.500 10.500 0 0 1-10.500 10.500H33c-1-5-1.500-9-1.500-19H24c0-10 1.500-19 5-27z" fill="#e4eaf3" />
        <path d="M16.500 16v5M38 16v5" stroke="#1a2b45" strokeWidth="2.200" /><path d="M13 34c7 8 21 8 28 0" stroke="#132238" strokeWidth="1.800" />
      </Tile>
      <Tile dot><Base fill="url(#blue)" /><AppA /></Tile>
      <Tile dot><Base fill="#f6f6f6" /><circle cx="27" cy="26.500" r="20" fill="#1d9fdf" /><path d="m15 27 23-9.500-3.500 19-7-5-3.500 3.500-1.500-5 10-9-12.500 7.500z" fill="#fff" /></Tile>
      <Tile dot><Base fill="#ececec" /><circle cx="27" cy="26.500" r="20" fill="#1a7ff0" /><circle cx="27" cy="26.500" r="17.500" stroke="#cfe6fb" strokeWidth="3" strokeDasharray=".8 1.400" /><path d="M41 14 29.500 29 25 24.500z" fill="#f52b20" /><path d="M14 39 25 24.500l4.500 4.500z" fill="#f3f3f3" /></Tile>
      <Tile><Base fill="url(#red)" /><path d="M22.500 38V17l16-3.500V34" stroke="#fff" strokeWidth="2.600" /><path d="m22 16 17-3.500v5L22 21z" fill="#fff" /><ellipse cx="18.500" cy="38" rx="5" ry="3.800" fill="#fff" /><ellipse cx="34.500" cy="35" rx="5" ry="3.800" fill="#fff" /></Tile>
      <Tile>
        <Base fill="#f6f5f4" /><path d="M4 18v-4A10.500 10.500 0 0 1 14.500 3.500h25A10.500 10.500 0 0 1 50 14v4z" fill="#fd463e" />
        <text x="27" y="14.500" textAnchor="middle" fontSize="9.500" fontWeight="700" fill="#fff" fontFamily="Inter,sans-serif">АПР.</text>
        <text x="27" y="42" textAnchor="middle" fontSize="27" fontWeight="300" fill="#333" fontFamily="Inter,sans-serif">5</text>
      </Tile>
      <Tile><Base fill="#f5f4f2" /><path d="M4 15v-1A10.500 10.500 0 0 1 14.500 3.500h25A10.500 10.500 0 0 1 50 14v1z" fill="#fecf0b" /><path d="M4 16.500h46" stroke="#b9b4a8" strokeDasharray="1 1" /><path d="M4 27h46M4 38.500h46" stroke="#d8d6d2" /></Tile>
      <Tile dot><Base fill="#111" /><rect x="5" y="4.500" width="44" height="44" rx="10" fill="#232323" stroke="#b9c4c6" strokeWidth="1.600" /><rect x="7.500" y="7" width="39" height="39" rx="7" stroke="#050505" strokeWidth="3" /><path d="m12.500 12 5 3.500-5 3.500M19.500 20.500h7" stroke="#fff" strokeWidth="1.700" /></Tile>
      <Tile>
        <circle cx="27" cy="26.500" r="24" fill="url(#green)" stroke="#e7f3ea" strokeWidth="1.500" />
        <g stroke="#e9fbf0" strokeWidth="1.500"><ellipse cx="27" cy="26.500" rx="15" ry="5.500" transform="rotate(5 27 26.500)" /><ellipse cx="27" cy="26.500" rx="15" ry="5.500" transform="rotate(65 27 26.500)" /><ellipse cx="27" cy="26.500" rx="15" ry="5.500" transform="rotate(125 27 26.500)" /></g><circle cx="27" cy="26.500" r="2.300" fill="#fff" />
      </Tile>
      <div className="relative flex">
        <Tile dot dotColor="bg-[#f6c08e]"><Base fill="url(#mail)" /><rect x="11" y="17" width="31" height="20" rx="2" fill="#eef0f3" stroke="#aab" /><path d="m11.500 18 15.500 13 15-13M12 36l10-9M41 36l-9-9" stroke="#9aa1ad" strokeWidth="1.200" /></Tile>
        <div className="absolute left-[27px] top-[4px] w-[33px] h-[22px] rounded-full bg-[#f60c0c] text-white text-[11.500px] leading-[22px] font-medium text-center">2402</div>
      </div>
      <Tile dot dotColor="bg-[#f6c08e]">
        <path d="m17 2 36 2v22l-15 6-22-6z" fill="#ffd84a" stroke="#111" strokeWidth="1.800" /><path d="m17 2 22 14L53 4" stroke="#111" strokeWidth="1.800" />
        <path d="m30 39 5-2 12 16-4 2z" fill="#3a3a3a" /><circle cx="19" cy="26" r="17" fill="#c2c2c2" stroke="#8d8d8d" strokeWidth="1.500" />
        <path d="M17 10h8c8 4 12 12 9 22l-17 4z" fill="#0b2c0b" /><path d="M19 13h4v4h-4zM25 13h4v4h-4zM19 19h4v4h-4zM25 19h4v4h-4zM31 20h3v4h-3zM19 25h4v4h-4zM25 25h4v4h-4zM31 26h3v3h-3zM19 31h4v3h-4zM25 31h4v2h-4z" fill="#11d81c" />
      </Tile>
      <DockSep className="ml-[14px] mr-[13px]" />
      <Tile>
        <Base fill="#f4f4f4" /><path d="M7 9q0-2 2-2h36q2 0 2 2v18H7z" fill="#8bbcf6" /><path d="M7 27h40v7H7z" fill="#23457c" /><path d="M7 34h40v12H7z" fill="#d5dde0" /><path d="M7 38q14-5 22 0v4q-12 3-22 0z" fill="#7aa0b4" />
        <path d="M29 33h17l4 16q-14 4-24 0z" fill="#e3e6e8" stroke="#8a8f94" /><path d="M27.500 28q9-3 19 0v6q-10 3-19 0z" fill="#151515" /><path d="m32 42 4-2 4 4 5-3v6H32z" fill="#8b9299" />
      </Tile>
      <Tile dot dotColor="bg-[#b9b39a]">
        <circle cx="28" cy="11" r="7.500" fill="#7b83eb" /><circle cx="44" cy="13" r="5.500" fill="#5059c9" /><path d="M38 21h13v13a8 8 0 0 1-13 7z" fill="#5059c9" /><path d="M17 21h25v15a12.500 12.500 0 0 1-25 0z" fill="#7b83eb" /><rect x="2" y="14" width="25" height="25" rx="2" fill="#4b53bc" />
        <text x="14.500" y="32.500" textAnchor="middle" fontSize="17" fontWeight="700" fill="#fff" fontFamily="Inter,sans-serif">T</text>
      </Tile>
      <DockSep className="ml-[13px] mr-[13px]" />
      <Tile>
        <rect x="0" y="10" width="53" height="33" fill="#2a2a2c" /><path d="M0 10h10v33H0z" fill="#4a4b4e" /><path d="M12 14h9M12 18h14M12 22h20M12 27h7M27 27h12M47 27h4M12 31h26" stroke="#a4a4a4" strokeWidth=".9" />
        <rect x="35" y="35" width="17.500" height="17.500" rx="4" fill="url(#blue)" /><AppA x={34} y={34.300} s={0.360} />
      </Tile>
      <Tile>
        <path d="m8 7 5.500 40q1 5 13.500 5t13.500-5L47 7z" fill="url(#bin)" opacity=".95" /><path d="M15 14l4 34M23 14l1 35M31 14l-1 35M39 14l-4 34" stroke="#777d7e" strokeWidth="1" opacity=".4" />
        <ellipse cx="27.500" cy="6.500" rx="19.500" ry="5.500" fill="#33383a" stroke="#c6caca" strokeWidth="1.500" /><path d="m12 8 2-5 6 0 3-3 6 2 5-2 5 3 4 3-1 3-7 2-8-2-7 2z" fill="#f1f1f1" /><path d="m33 2 5 1-3 5z" fill="#c0573c" /><path d="m22 4 5 0-2 4z" fill="#3c9a5a" /><path d="m16 5 4-1v3zM29 6l4 1-2 3z" fill="#3a3f44" />
      </Tile>
    </div>
  );
}

function Wallpaper() {
  return (
    <svg width="1440" height="92" viewBox="0 808 1440 92" className="absolute left-0 bottom-0" preserveAspectRatio="none">
      <defs>
        <linearGradient id="wl" x1="0" y1="0" x2="0" y2="1"><stop stopColor="#5e2c10" /><stop offset=".5" stopColor="#79391a" /><stop offset="1" stopColor="#84442c" /></linearGradient>
        <linearGradient id="or" x1="0" y1="0" x2="0" y2="1"><stop offset=".15" stopColor="#b85f08" /><stop offset=".6" stopColor="#fb7c26" /><stop offset="1" stopColor="#ff8a36" /></linearGradient>
      </defs>
      <path d="M0 808h1440v92H0z" fill="#561602" />
      <path d="M0 808h900v92H0z" fill="url(#wl)" />
      <path d="m226 900 16-8h10l-12 8z" fill="#2b0d08" />
      <path d="m238 900 12-8h240v8z" fill="#c4625a" />
      <path d="M488 892h400l20 8H488z" fill="#cf6b45" />
      <path d="m486 900 2-8h2l-2 8zM554 900l5-8h2l-4 8z" fill="#2c2410" />
      <path d="M865 808h320l-60 92H905z" fill="#132019" />
      <path d="M880 808h40v18h-40zM975 808h90v18h-90z" fill="#5a2d0e" />
      <path d="m1005 892 8 8h8l-8-8zM1038 900l5-8h5l-4 8zM1058 900l5-8h4l-3 8z" fill="#4a9a16" />
      <path d="M1080 892h25v8h-25z" fill="#a5480d" />
      <path d="M1105 892h38v8h-40z" fill="#132019" />
      <path d="M1140 808h72l-10 14v72h-62z" fill="#a5480d" />
      <path d="M1140 894h55v6h-50z" fill="#ee5c06" />
      <path d="m1364 873 28 27h-20z" fill="#6d5385" />
      <path d="M1298 808h42l7 14c8 11 12 18 12 30-.5 6-.5 10 1 13l20 35h-39z" fill="url(#or)" />
    </svg>
  );
}

export default function App() {
  return (
    <div className="relative w-[1440px] h-[900px] overflow-hidden bg-[#2a6bba] flex flex-col font-['Inter',sans-serif]">
      <Wallpaper />
      <MenuBar />
      <main className="relative h-[797px] shrink-0 rounded-[10px] overflow-hidden bg-[#e9e9e9] flex flex-col">
        <div className="h-[29px] shrink-0 bg-[#f1f1f1] border-b border-[#d5d5d5] flex items-center">
          <div className="flex gap-2 pl-2 w-[120px]">
            <div className="w-3 h-3 rounded-full bg-[#fe4a45] border border-[#e0302c]" />
            <div className="w-3 h-3 rounded-full bg-[#fdb905] border border-[#e2a010]" />
            <div className="w-3 h-3 rounded-full bg-[#04cc26] border border-[#0aa91f]" />
          </div>
          <div className="flex-1 text-center text-[13px] font-bold text-[#444] pr-[120px] tracking-[0.07px]">Cisco Packet Tracer - /Users/Daniil/Desktop/4.1.pkt</div>
        </div>
        <MainToolbar />
        <EditToolbar />
        <NavBar />
        <div className="h-[506px] shrink-0 flex">
          <Topology />
          <PduPanel />
          <SimPanel />
        </div>
        <TimeBar />
        <div className="h-[113px] shrink-0 flex">
          <DevicePicker />
          <Cables />
          <div className="flex-1 bg-[#e9e9e9] flex items-center justify-end pr-[4px]">
            <div className="w-1 h-[6px] rounded bg-[#d0d0d0] mr-[3px]" />
            <Ico w={8} h={9} vb="0 0 8 9"><path d="M8 0v9L0 4.500z" fill="#555" /></Ico>
          </div>
        </div>
      </main>
      <div className="flex justify-center"><Dock /></div>
    </div>
  );
}
